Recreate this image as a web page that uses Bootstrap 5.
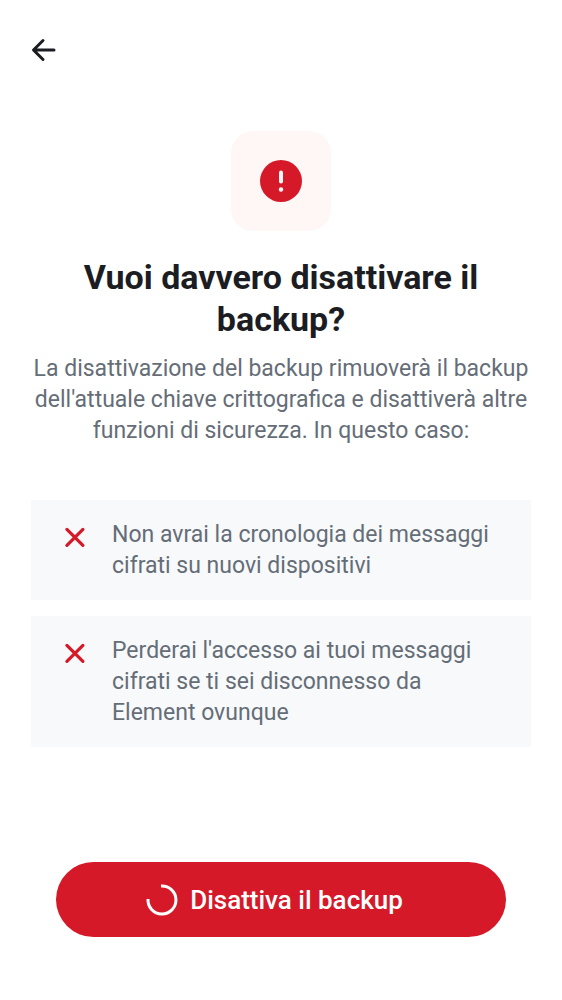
<!DOCTYPE html>
<html lang="it">
<head>
<meta charset="utf-8">
<meta name="viewport" content="width=device-width, initial-scale=1">
<title>Disattiva il backup</title>
<link href="https://cdn.jsdelivr.net/npm/bootstrap@5.3.0/dist/css/bootstrap.min.css" rel="stylesheet">
<style>
  body { font-family: Roboto, "Liberation Sans", sans-serif; color: #1b1d22; background: #fff; }
  .screen { padding: 31px 31px 63px; }
  .back { width: 38px; height: 38px; margin-left: -6px; line-height: 0; }
  .hero-icon { width: 100px; height: 100px; border-radius: 22px; background: #fff7f6; margin-top: 62px; }
  .headline { font-size: 34px; line-height: 42px; font-weight: 700; margin: 25px 0 13px; padding: 0 32px; }
  .copy { font-size: 23px; line-height: 31px; color: #656d77; }
  .consequences { margin-top: 54px; gap: 16px; }
  .consequence { background: #f7f9fb; padding: 19px 31px; gap: 24px; }
  .cross { margin-top: 5px; }
  .action { background: #d51928; color: #fff; height: 75px; font-size: 26px; line-height: 36px; font-weight: 500; gap: 12px; margin: 0 25px; padding: 0 25px 0 12px; }
  .action:hover { background: #c01624; color: #fff; }
</style>
</head>
<body>
<div class="screen d-flex flex-column min-vh-100">
  <header>
    <button type="button" class="back btn border-0 p-0 d-flex align-items-center justify-content-center" aria-label="Indietro">
      <svg width="26" height="26" viewBox="0 0 26 26" fill="none" stroke="#1b1d22" stroke-width="3" stroke-linecap="round" stroke-linejoin="round" aria-hidden="true"><path d="M23 13H3M12 3.500 2.500 13l9.500 9.500"/></svg>
    </button>
  </header>
  <main class="d-flex flex-column flex-grow-1">
    <div class="hero-icon d-flex align-items-center justify-content-center mx-auto">
      <svg width="42" height="42" viewBox="0 0 42 42" aria-hidden="true"><circle cx="21" cy="21" r="21" fill="#d51928"/><rect x="19" y="10.500" width="4" height="13" rx="2" fill="#fff7f6"/><circle cx="21" cy="29.500" r="2.200" fill="#fff7f6"/></svg>
    </div>
    <h1 class="headline text-center">Vuoi davvero disattivare il backup?</h1>
    <p class="copy text-center mb-0">La disattivazione del backup rimuoverà il backup dell'attuale chiave crittografica e disattiverà altre funzioni di sicurezza. In questo caso:</p>
    <ul class="consequences list-unstyled d-flex flex-column mb-0">
      <li class="consequence copy d-flex align-items-start">
        <svg class="cross flex-shrink-0" width="26" height="26" viewBox="0 0 26 26" fill="none" stroke="#d51928" stroke-width="3.200" stroke-linecap="round" aria-hidden="true"><path d="m4.900 5.400 16 16m0-16-16 16"/></svg>
        <span>Non avrai la cronologia dei messaggi cifrati su nuovi dispositivi</span>
      </li>
      <li class="consequence copy d-flex align-items-start">
        <svg class="cross flex-shrink-0" width="26" height="26" viewBox="0 0 26 26" fill="none" stroke="#d51928" stroke-width="3.200" stroke-linecap="round" aria-hidden="true"><path d="m4.900 5.400 16 16m0-16-16 16"/></svg>
        <span>Perderai l'accesso ai tuoi messaggi cifrati se ti sei disconnesso da Element ovunque</span>
      </li>
    </ul>
  </main>
  <button type="button" class="action btn border-0 rounded-pill d-flex align-items-center justify-content-center">
    <svg width="32" height="32" viewBox="0 0 32 32" fill="none" stroke="#fff" stroke-width="3" aria-hidden="true"><path d="M15 2A14 14 0 1 1 2 15"/></svg>
    <span>Disattiva il backup</span>
  </button>
</div>
<script src="https://cdn.jsdelivr.net/npm/bootstrap@5.3.0/dist/js/bootstrap.bundle.min.js"></script>
</body>
</html>
